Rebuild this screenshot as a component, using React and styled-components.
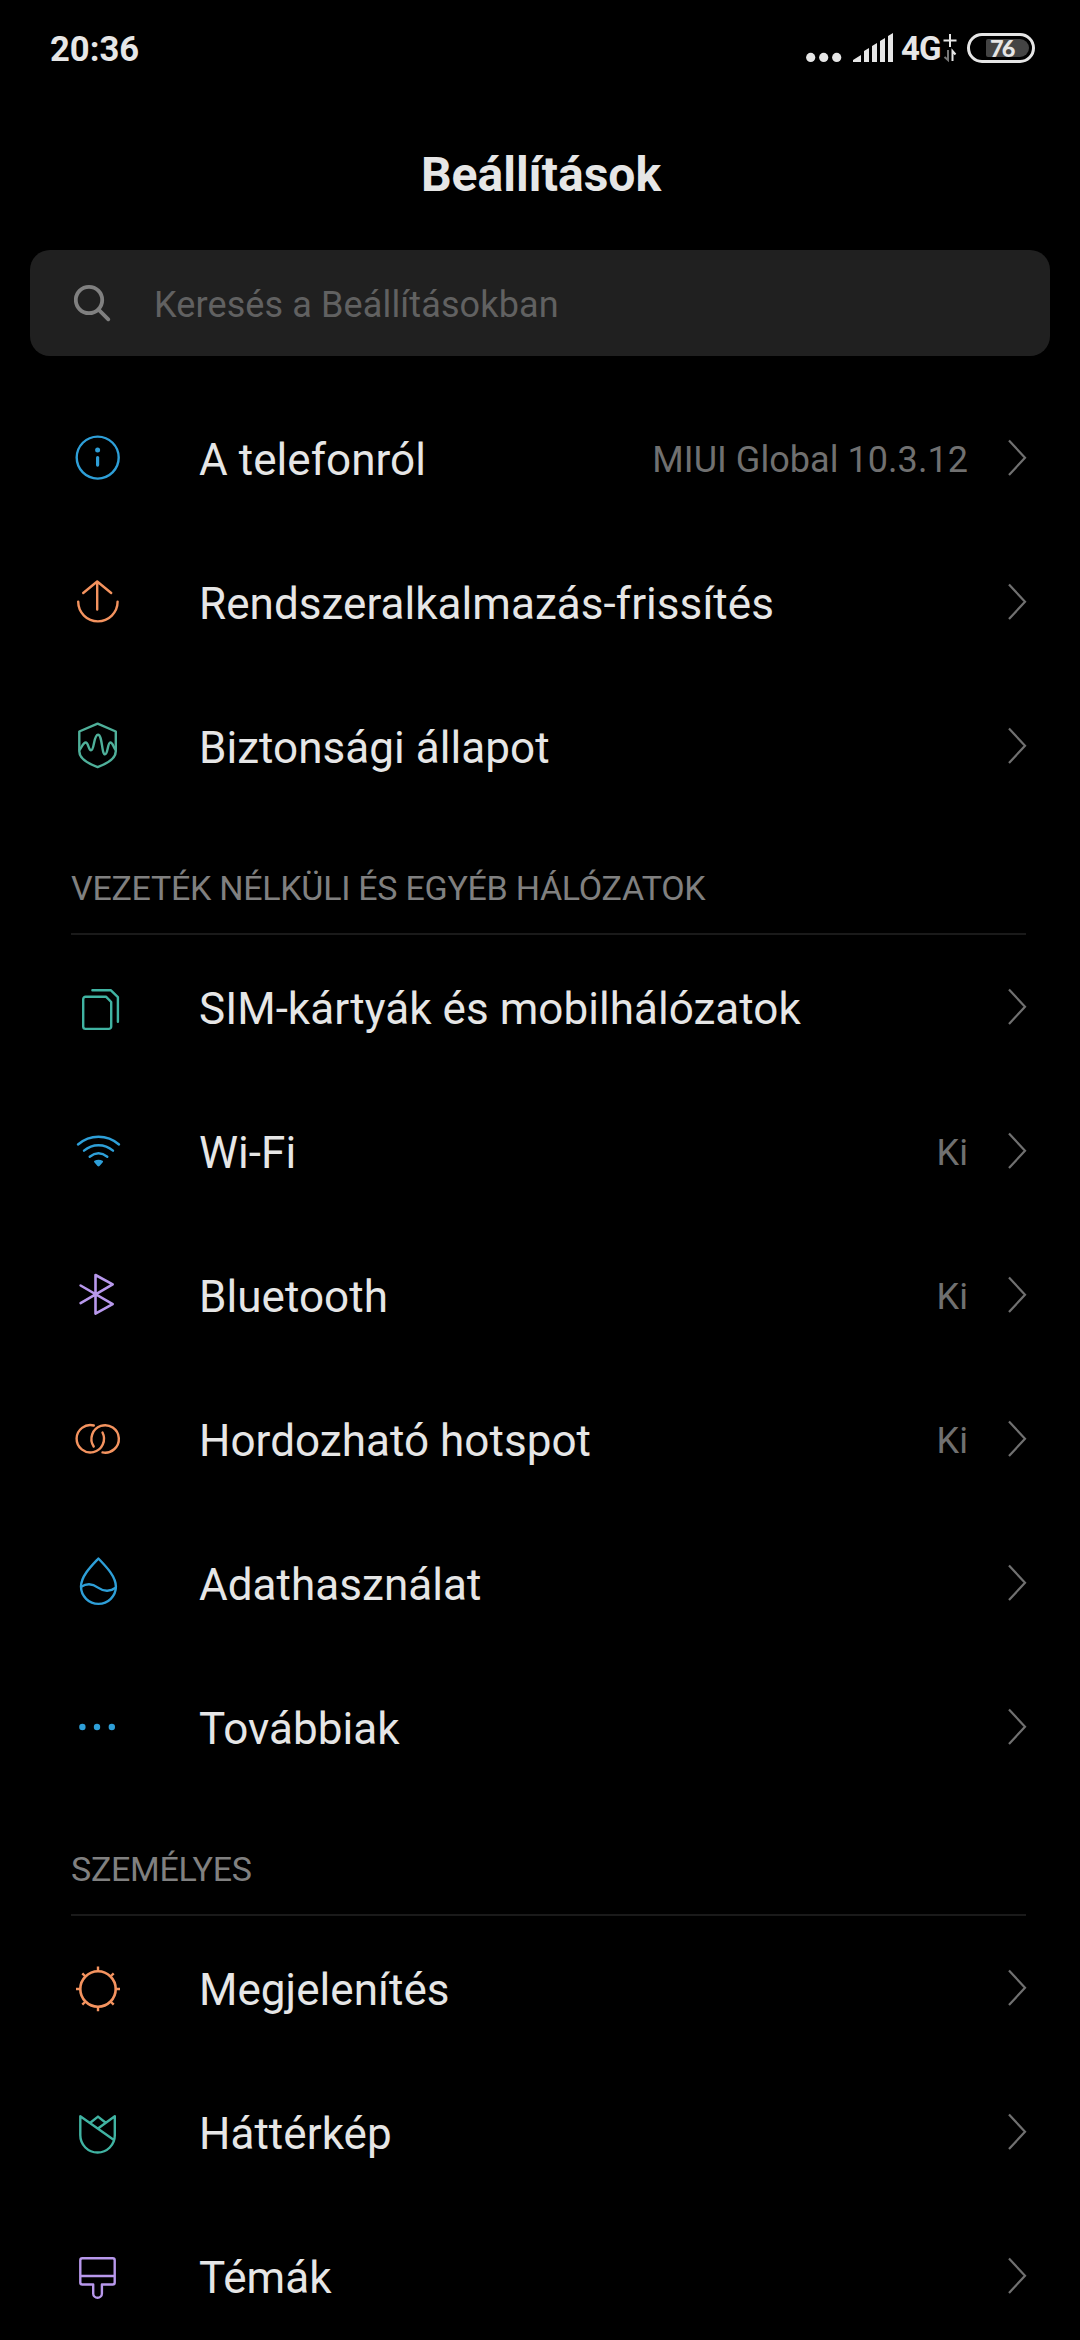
import React from 'react';
import styled, {createGlobalStyle} from 'styled-components';

const GlobalStyles = createGlobalStyle`
* {
    box-sizing:border-box;
}
body {
    margin:0;
    background:#000;
    color:#e6e6e6;
    font-family: Roboto, sans-serif;
}
`;

const Screen = styled.div`
width:1080px;
height:2340px;
overflow:hidden;
background:#000;
`;

const StatusBar = styled.header`
height:96px;
padding: 0 45px 0 50px;
display:flex;
justify-content:space-between;
align-items:center;
`;

const Clock = styled.span`
font-size:34.6px;
font-weight:700;
line-height:40px;
padding-top:1px;
`;

const StatusIcons = styled.div`
display:flex;
align-items:center;
`;

const Network = styled.span`
width:42px;
margin-left:7px;
font-size:33px;
font-weight:700;
line-height:40px;
letter-spacing:-1px;
padding-top:1px;
`;

const Battery = styled.div`
width:68px;
height:30px;
margin-left:10px;
padding: 3px 3px 3px 16px;
border:3px solid #e6e6e6;
border-radius:15px;
display:flex;
`;

const Charge = styled.div`
flex:1;
padding-left:4px;
background:#444;
border-radius: 2px 9px 9px 2px;
font-family: Lato, sans-serif;
font-size:23.5px;
font-weight:900;
line-height:18px;
letter-spacing:-2px;
`;

const Title = styled.h1`
height:154px;
margin:0;
padding: 51px 0 0 2px;
font-size:48px;
font-weight:700;
line-height:56px;
text-align:center;
`;

const SearchBox = styled.div`
height:106px;
margin: 0 30px 30px;
padding-left:44px;
display:flex;
align-items:center;
gap:42px;
background:#202020;
border-radius:20px;
color:#616161;
font-size:36px;
letter-spacing:0.12px;
`;

const SearchText = styled.span`
padding-top:4px;
`;

const SectionTitle = styled.h2`
height:117px;
margin: 0 54px 0 71px;
padding-top:50px;
border-bottom:2px solid #1a1a1a;
color:#808080;
font-size:34px;
font-weight:400;
line-height:40px;
letter-spacing:-0.27px;
text-transform:uppercase;
`;

const Row = styled.div`
height:144px;
padding: 0 53px 0 72px;
display:flex;
align-items:center;
`;

const Icon = styled.svg`
width:52px;
height:52px;
flex:none;
fill:none;
stroke:${props => props.$color};
stroke-width:2.4;
stroke-linecap:round;
stroke-linejoin:round;

.solid {
    fill:${props => props.$color};
    stroke:none;
}
`;

const Label = styled.span`
flex:1;
margin-left:75px;
padding-top:4px;
font-size:44px;
line-height:52px;
letter-spacing:0.05px;
white-space:nowrap;
`;

const Value = styled.span`
padding-top:3px;
margin-right:40px;
color:#707070;
font-size:36px;
letter-spacing:0.05px;
`;

const Arrow = styled.svg`
width:19px;
height:38px;
flex:none;
fill:none;
stroke:#707070;
stroke-width:2.2;
`;

const blue = '#2e9fd8';
const orange = '#f4935f';
const green = '#4fb09a';
const teal = '#40b3a2';
const purple = '#b898ec';

// every icon is drawn on a 52x52 grid
const icons = {
    info: <>
        <circle cx="25.7" cy="25.6" r="21" />
        <circle className="solid" cx="25.6" cy="18" r="2.5" />
        <path d="M25.6 25.6v7.5" strokeWidth="3.2" />
    </>,
    update: <path d="M25.2 5.5v28M11.2 17 25.2 5.5 39.2 17M6.2 25.6a19.7 19.8 0 0 0 39.4 0" />,
    security: <>
        <path d="M25.6 3.7 43.8 11.5v19.7c0 6.500-7.500 12-18.200 15.900C14.900 43.200 7.300 37.700 7.300 31.200V11.500Z" />
        <path d="M7.800 29.500C9.500 28 11 22.500 13.700 22.500 16.500 22.500 16.500 30.300 19 30.300 22.500 30.300 21.500 14.700 26 14.700 30.500 14.700 29.500 34.300 33 34.300 36 34.300 35.500 22.500 38.300 22.500 41 22.500 41.500 28 43.400 29.500" />
    </>,
    sim: <>
        <path d="M13.700 15.800h20.500l5 5.200v24.500a2.400 2.400 0 0 1-2.400 2.400H13.600a2.400 2.400 0 0 1-2.400-2.400V18.200a2.400 2.400 0 0 1 2.500-2.400Z" />
        <path d="M20.400 9.200h18.300l7.200 6.900v24.700" />
    </>,
    wifi: <>
        <path d="M6 19.500c12-10.300 29-10.300 41 0M12 25.700c8.500-7.200 20.500-7.200 29 0M17.700 31.700c5.500-4.300 12.100-4.300 17.600 0" />
        <path className="solid" d="M22.500 35.800c2.600-1.400 5.500-1.400 8.100 0q.9.700.2 1.500l-3.300 3.700q-1 .9-2 0l-3.200-3.700q-.7-.8.200-1.500Z" />
    </>,
    bluetooth: <path d="M8.600 16.500 40.700 35.200 23.500 44.700V6L40.700 15.300 8.600 34.200" strokeWidth="2.6" />,
    hotspot: <>
        <path d="M21.800 12.500A13.700 13.700 0 1 0 30.500 19.500" />
        <path d="M21.700 33.500A13.700 13.700 0 1 1 30.500 39.400" />
    </>,
    data: <>
        <path d="M26.400 1.500C33 8.500 43.900 19 43.900 29.600a17.450 17.300 0 0 1-34.900 0C9 19 19.800 8.500 26.400 1.500Z" />
        <path d="M9.200 29.800c5.500-3.500 11.300-3.200 16.800.8 5.500 4 12.500 4.200 17.600.2" />
    </>,
    more: <>
        <circle className="solid" cx="10.400" cy="26" r="3.2" />
        <circle className="solid" cx="25" cy="26" r="3.2" />
        <circle className="solid" cx="39.800" cy="26" r="3.2" />
    </>,
    display: <>
        <circle cx="26" cy="27" r="17.700" strokeWidth="2.6" />
        <path d="M26 9V4.500M26 45v4.300M8.300 27H4M43.700 27H48M13.500 14.500l-3.200-3.200M38.500 14.500l3.200-3.200M13.500 39.500l-3.200 3.200M38.500 39.500l3.200 3.200" strokeLinecap="butt" />
    </>,
    wallpaper: <path d="M41.600 33.800 8.300 10.300v19a17.250 17.250 0 0 0 34.500 0v-19L26 22.500M18.300 16.800l7.700-6.200 7.700 6.200" />,
    themes: <path d="M10.300 8.200h30.400a2 2 0 0 1 2 2v22.300a2 2 0 0 1-2 2H29.900v8.900a4.350 4.350 0 0 1-8.700 0v-8.900H10.300a2 2 0 0 1-2-2V10.200a2 2 0 0 1 2-2ZM8.300 26h34.400" />,
};

const about = [
    {icon: 'info', color: blue, label: 'A telefonról', value: 'MIUI Global 10.3.12'},
    {icon: 'update', color: orange, label: 'Rendszeralkalmazás-frissítés'},
    {icon: 'security', color: green, label: 'Biztonsági állapot'},
];

const networks = [
    {icon: 'sim', color: teal, label: 'SIM-kártyák és mobilhálózatok'},
    {icon: 'wifi', color: blue, label: 'Wi-Fi', value: 'Ki'},
    {icon: 'bluetooth', color: purple, label: 'Bluetooth', value: 'Ki'},
    {icon: 'hotspot', color: orange, label: 'Hordozható hotspot', value: 'Ki'},
    {icon: 'data', color: blue, label: 'Adathasználat'},
    {icon: 'more', color: blue, label: 'Továbbiak'},
];

const personal = [
    {icon: 'display', color: orange, label: 'Megjelenítés'},
    {icon: 'wallpaper', color: teal, label: 'Háttérkép'},
    {icon: 'themes', color: purple, label: 'Témák'},
];

const Rows = ({items}) => items.map(item => (
    <Row key={item.label}>
        <Icon viewBox="0 0 52 52" $color={item.color}>{icons[item.icon]}</Icon>
        <Label>{item.label}</Label>
        {item.value && <Value>{item.value}</Value>}
        <Arrow viewBox="0 0 19 38"><path d="M1 1.500 17 18.700 1 36" /></Arrow>
    </Row>
));

export default function App() {
    return (
        <Screen>
            <GlobalStyles />
            <StatusBar>
                <Clock>20:36</Clock>
                <StatusIcons>
                    <svg width="88" height="30" viewBox="0 0 88 30" fill="#e6e6e6">
                        <circle cx="4.700" cy="24.400" r="4.600" />
                        <circle cx="17.700" cy="24.400" r="4.600" />
                        <circle cx="30.700" cy="24.400" r="4.600" />
                        <path d="M47 29v-2l8-5v7ZM58 18l5-3v14h-5ZM66 13l5-3v19h-5ZM74 8l5-3v24h-5ZM82 3l5-3v29h-5Z" />
                    </svg>
                    <Network>4G</Network>
                    <svg width="14" height="30" viewBox="0 0 14 30" fill="none" stroke="#e6e6e6" strokeWidth="2">
                        <path d="M7 1v13M.5 7.500h13" />
                        <path d="M5 17v10L1.500 24" stroke="#777" />
                        <path d="M9.500 28V18l3 3.500" />
                    </svg>
                    <Battery><Charge>76</Charge></Battery>
                </StatusIcons>
            </StatusBar>
            <Title>Beállítások</Title>
            <SearchBox>
                <svg width="38" height="38" viewBox="0 0 38 38" fill="none" stroke="#808080" strokeWidth="3.800" strokeLinecap="round">
                    <circle cx="15" cy="16" r="13.200" />
                    <path d="m24.800 25.800 9.500 9.500" />
                </svg>
                <SearchText>Keresés a Beállításokban</SearchText>
            </SearchBox>
            <Rows items={about} />
            <SectionTitle>Vezeték nélküli és egyéb hálózatok</SectionTitle>
            <Rows items={networks} />
            <SectionTitle>Személyes</SectionTitle>
            <Rows items={personal} />
        </Screen>
    );
}
